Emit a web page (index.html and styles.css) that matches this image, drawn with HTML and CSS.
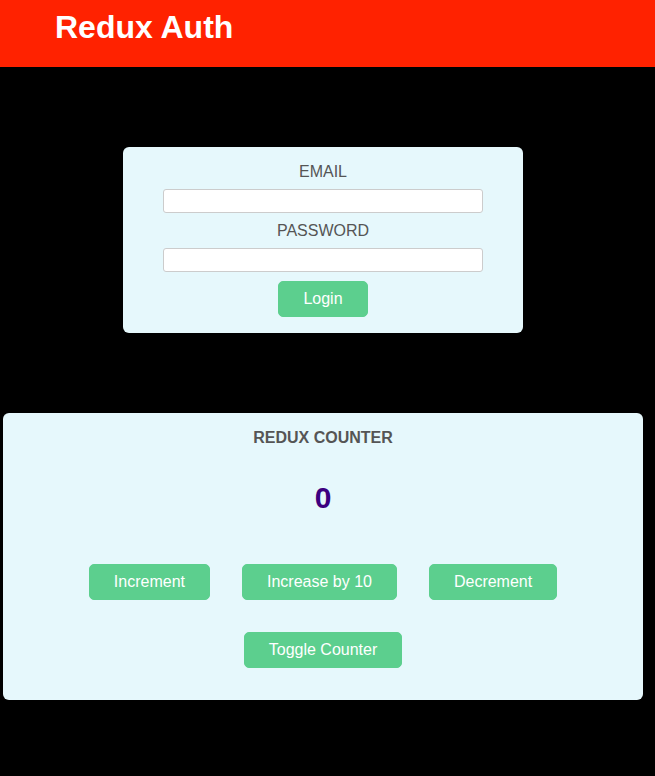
FILE: index.html
```html
<!DOCTYPE html>
<html lang="en">
<head>
<meta charset="utf-8">
<title>Redux Auth</title>
<link rel="stylesheet" href="styles.css">
</head>
<body>
<header class="header">
  <h1 class="brand">Redux Auth</h1>
</header>
<main class="main">
  <section class="auth">
    <form class="auth-form">
      <div class="control">
        <label class="label" for="email">EMAIL</label>
        <input class="input" id="email" type="email">
      </div>
      <div class="control">
        <label class="label" for="password">PASSWORD</label>
        <input class="input" id="password" type="password">
      </div>
      <button class="btn" type="button">Login</button>
    </form>
  </section>
  <section class="counter">
    <h2 class="counter-title">REDUX COUNTER</h2>
    <div class="value">0</div>
    <div class="actions">
      <button class="btn" type="button">Increment</button>
      <button class="btn" type="button">Increase by 10</button>
      <button class="btn" type="button">Decrement</button>
    </div>
    <button class="btn" type="button">Toggle Counter</button>
  </section>
</main>
</body>
</html>
```
FILE: styles.css
```css
* { box-sizing: border-box; }
html, body { margin: 0; padding: 0; }
body {
  background: #000;
  font-family: "Liberation Sans", Arial, sans-serif;
}
.header {
  height: 67px;
  background: #ff2200;
  padding: 9px 55px 0;
}
.brand {
  margin: 0;
  font-size: 32px;
  font-weight: bold;
  color: #fff;
  line-height: normal;
}
.main {
  padding-right: 9px;
}
.auth {
  width: 400px;
  margin: 80px auto 0;
  background: #e6f8fc;
  border-radius: 6px;
  padding: 16px 40px 16px;
  text-align: center;
}
.control {
  margin-bottom: 9px;
}
.label {
  display: block;
  font-size: 16px;
  color: #555;
  margin-bottom: 8px;
}
.input {
  display: block;
  width: 100%;
  height: 24px;
  border: 1px solid #ccc;
  border-radius: 3px;
  background: #fff;
}
.btn {
  font-family: inherit;
  font-size: 16px;
  color: #fff;
  background: #5ccf8e;
  border: 1px solid #5ccf8e;
  border-radius: 5px;
  padding: 8px 24px;
  line-height: normal;
}
.counter {
  width: 640px;
  margin: 80px auto 0;
  background: #e6f8fc;
  border-radius: 6px;
  padding: 16px 0 32px;
  text-align: center;
}
.counter-title {
  margin: 0;
  font-size: 16px;
  font-weight: bold;
  color: #555;
}
.value {
  margin: 34px 0 49px;
  font-size: 30px;
  font-weight: bold;
  color: #3c0080;
}
.actions {
  display: flex;
  justify-content: center;
  gap: 32px;
  margin-bottom: 32px;
}
```
